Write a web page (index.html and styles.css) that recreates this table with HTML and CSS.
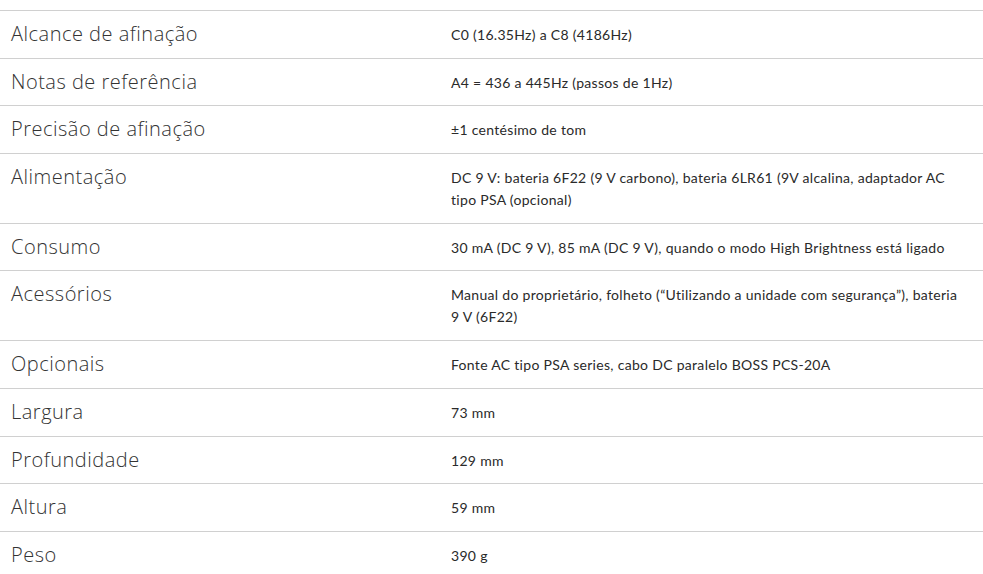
FILE: index.html
```html
<!DOCTYPE html>
<html lang="pt">
<head>
<meta charset="utf-8">
<link rel="stylesheet" href="styles.css">
</head>
<body>
<table class="specs">
  <tr><th>Alcance de afinação</th><td>C0 (16.35Hz) a C8 (4186Hz)</td></tr>
  <tr><th>Notas de referência</th><td>A4 = 436 a 445Hz (passos de 1Hz)</td></tr>
  <tr><th>Precisão de afinação</th><td>±1 centésimo de tom</td></tr>
  <tr><th>Alimentação</th><td>DC 9 V: bateria 6F22 (9 V carbono), bateria 6LR61 (9V alcalina, adaptador AC tipo PSA (opcional)</td></tr>
  <tr><th>Consumo</th><td>30 mA (DC 9 V), 85 mA (DC 9 V), quando o modo High Brightness está ligado</td></tr>
  <tr><th>Acessórios</th><td>Manual do proprietário, folheto (“Utilizando a unidade com segurança”), bateria 9 V (6F22)</td></tr>
  <tr><th>Opcionais</th><td>Fonte AC tipo PSA series, cabo DC paralelo BOSS PCS-20A</td></tr>
  <tr><th>Largura</th><td>73 mm</td></tr>
  <tr><th>Profundidade</th><td>129 mm</td></tr>
  <tr><th>Altura</th><td>59 mm</td></tr>
  <tr><th>Peso</th><td>390 g</td></tr>
</table>
</body>
</html>
```
FILE: styles.css
```css
html, body {
  margin: 0;
  padding: 0;
  background: #fff;
}
body {
  padding-top: 10px;
}
.specs {
  width: 983px;
  border-collapse: collapse;
  border-top: 1px solid #d0d0d0;
}
.specs tr {
  border-bottom: 1px solid #d0d0d0;
}
.specs th,
.specs td {
  vertical-align: top;
  text-align: left;
  padding: 13px 11px 11.7px 11px;
  line-height: 22px;
}
.specs th {
  width: 418px;
  font-family: "Open Sans", Lato, sans-serif;
  font-weight: 300;
  font-size: 20px;
  letter-spacing: 0.5px;
  color: #333;
  position: relative;
  top: -1px;
}
.specs td {
  font-family: Lato, "Open Sans", sans-serif;
  font-weight: 400;
  font-size: 14px;
  letter-spacing: 0.3px;
  color: #2a2a2a;
  padding-right: 14px;
}
```
